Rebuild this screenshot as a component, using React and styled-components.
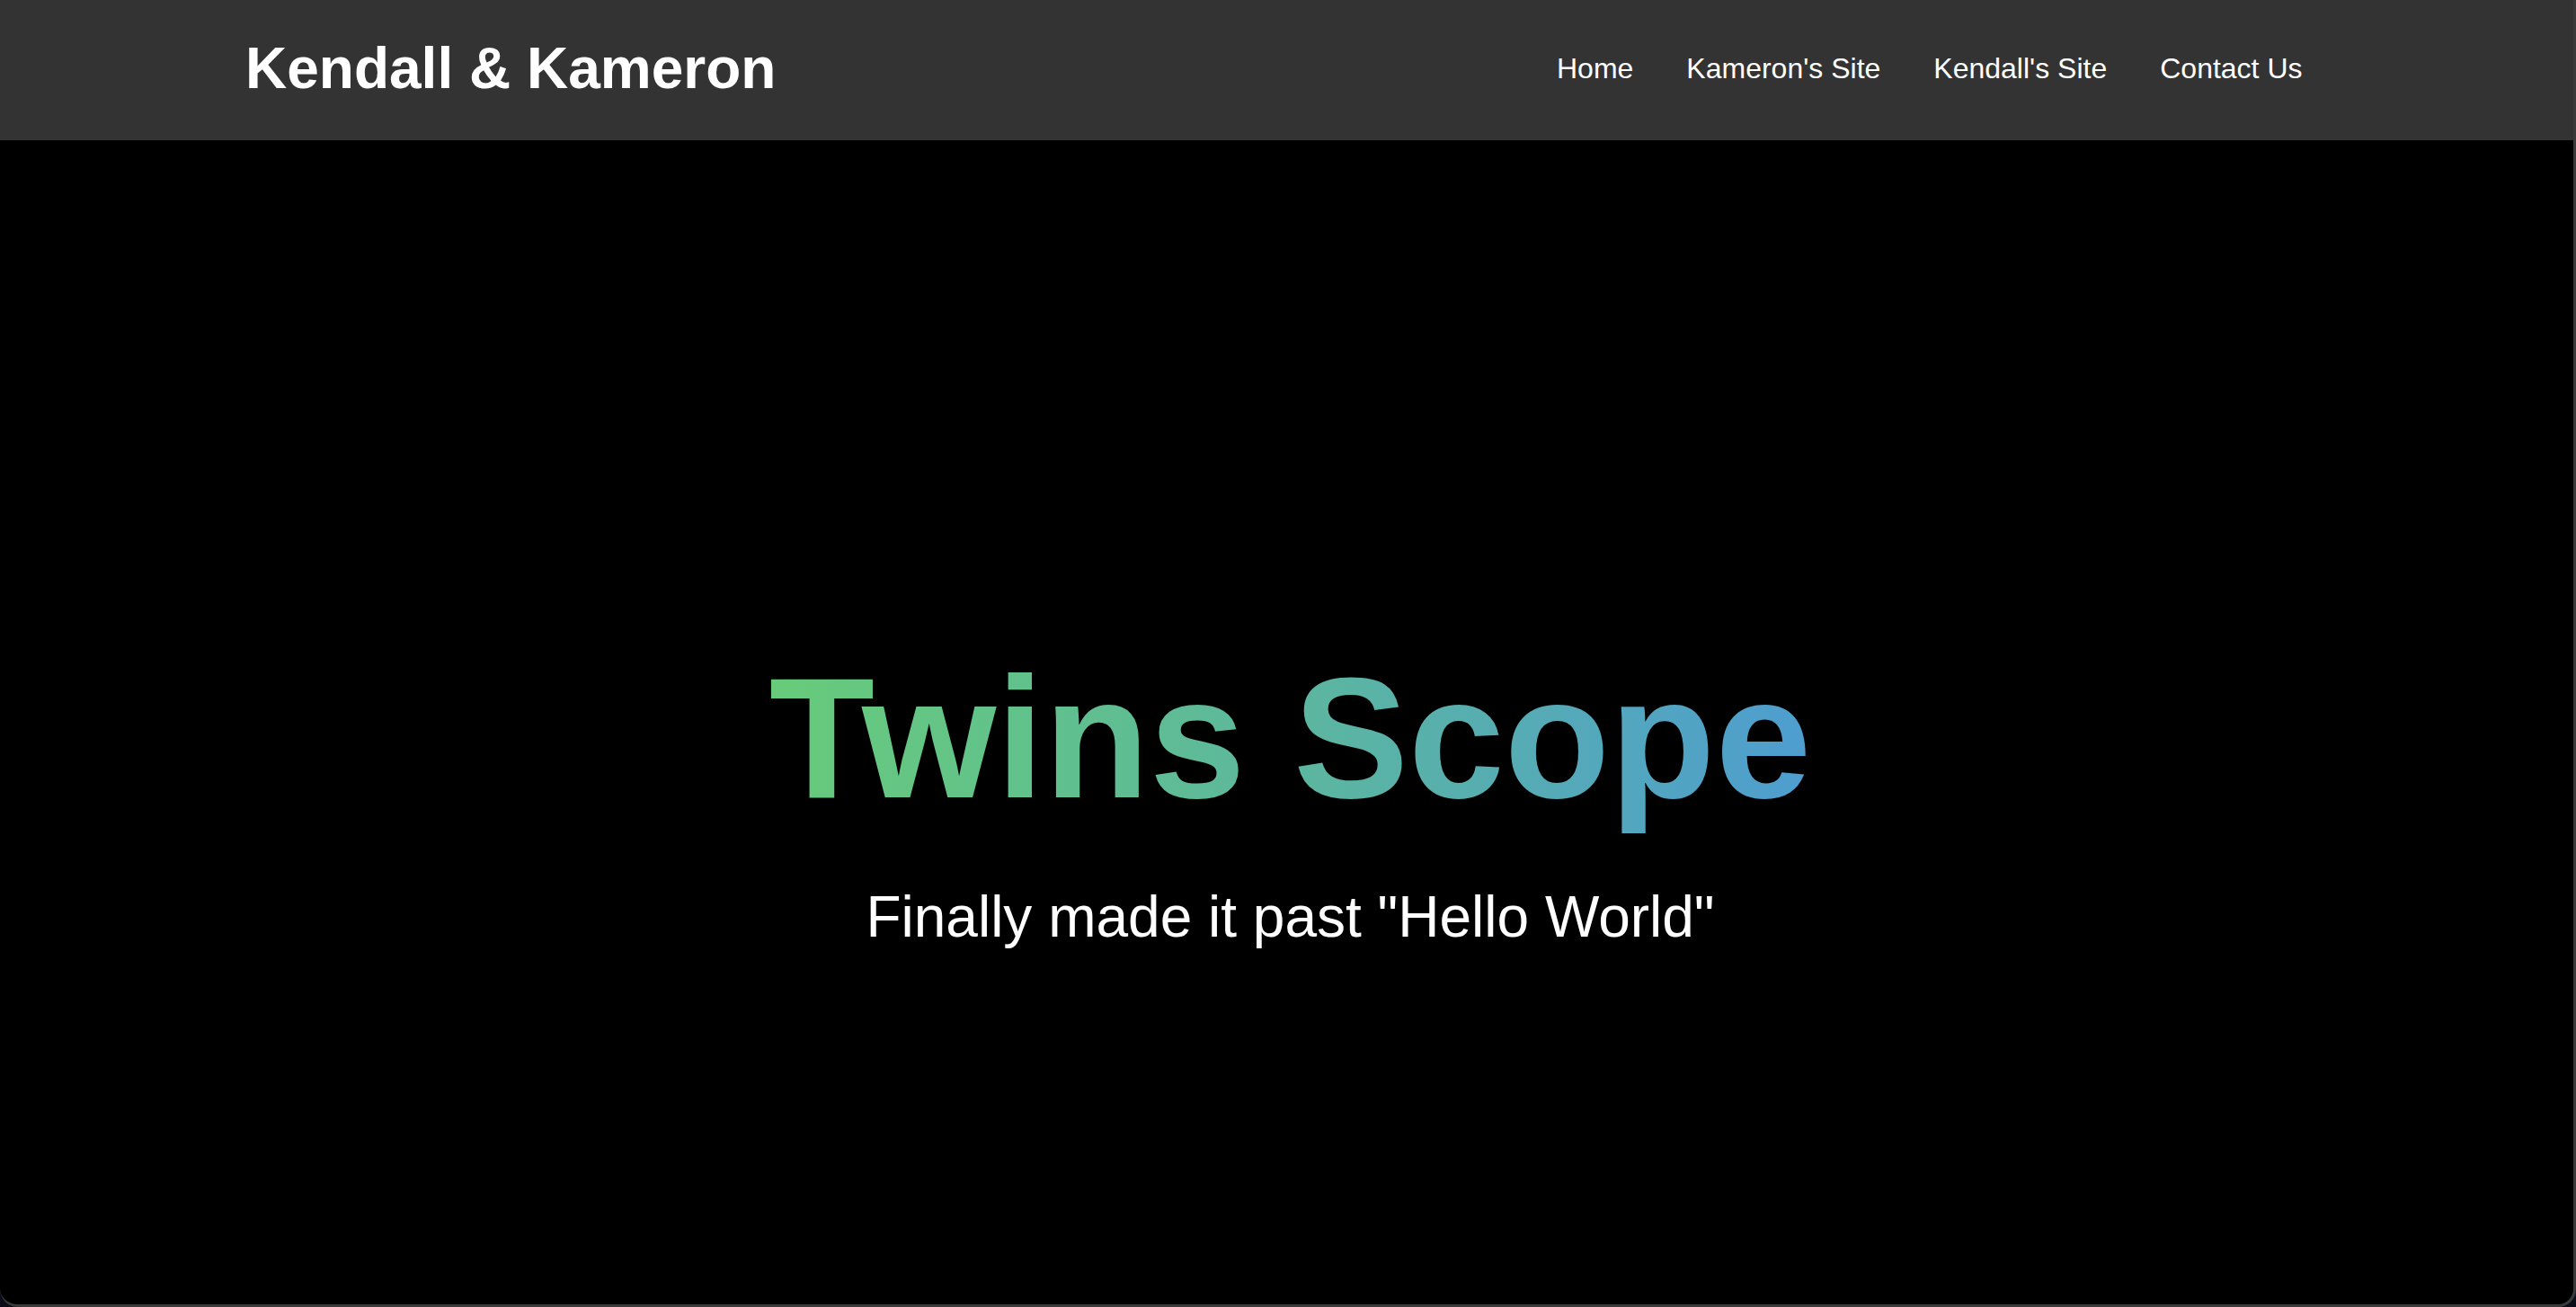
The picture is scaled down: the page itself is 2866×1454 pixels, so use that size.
import React from "react";
import styled, { createGlobalStyle } from "styled-components";

const GlobalStyle = createGlobalStyle`
  html, body {
    margin: 0;
    padding: 0;
    background: #0a0d18;
    font-family: "Liberation Sans", Arial, Helvetica, sans-serif;
  }
  * { box-sizing: border-box; }
`;

const Frame = styled.div`
  height: 100vh;
  overflow: hidden;
  background: #000;
  border-right: 3px solid #3a3a3a;
  border-bottom: 3px solid #3a3a3a;
  border-radius: 0 0 20px 20px;
  display: flex;
  flex-direction: column;
`;

const Header = styled.header`
  flex: none;
  height: 156px;
  background: #333333;
  display: flex;
  align-items: center;
  justify-content: space-between;
  padding: 0 272px 3px 273px;
`;

const Brand = styled.h1`
  margin: 0 0 2px;
  font-size: 64px;
  font-weight: 700;
  color: #ffffff;
  letter-spacing: 0;
`;

const Nav = styled.nav`
  display: flex;
  align-items: center;
`;

const NavLink = styled.a`
  margin: 0 29.5px;
  font-size: 32px;
  color: #ffffff;
  text-decoration: none;
  &:first-child { margin-left: 0; }
`;

const Hero = styled.main`
  flex: none;
  min-height: 100vh;
  display: flex;
  flex-direction: column;
  align-items: center;
  justify-content: center;
  text-align: center;
  padding-left: 8px;
`;

const Title = styled.h2`
  margin: 0;
  display: inline-block;
  font-size: 192px;
  font-weight: 700;
  background: linear-gradient(90deg, #67cb7a 0%, #5cb79e 50%, #4e9dd0 100%);
  -webkit-background-clip: text;
  background-clip: text;
  color: transparent;
`;

const Tagline = styled.p`
  margin: 52px 0 0;
  font-size: 64px;
  color: #ffffff;
`;

const links = ["Home", "Kameron's Site", "Kendall's Site", "Contact Us"];

export default function App() {
  return (
    <>
      <GlobalStyle />
      <Frame>
        <Header>
          <Brand>Kendall &amp; Kameron</Brand>
          <Nav>
            {links.map((l) => (
              <NavLink key={l} href="#">
                {l}
              </NavLink>
            ))}
          </Nav>
        </Header>
        <Hero>
          <Title>Twins Scope</Title>
          <Tagline>Finally made it past "Hello World"</Tagline>
        </Hero>
      </Frame>
    </>
  );
}
